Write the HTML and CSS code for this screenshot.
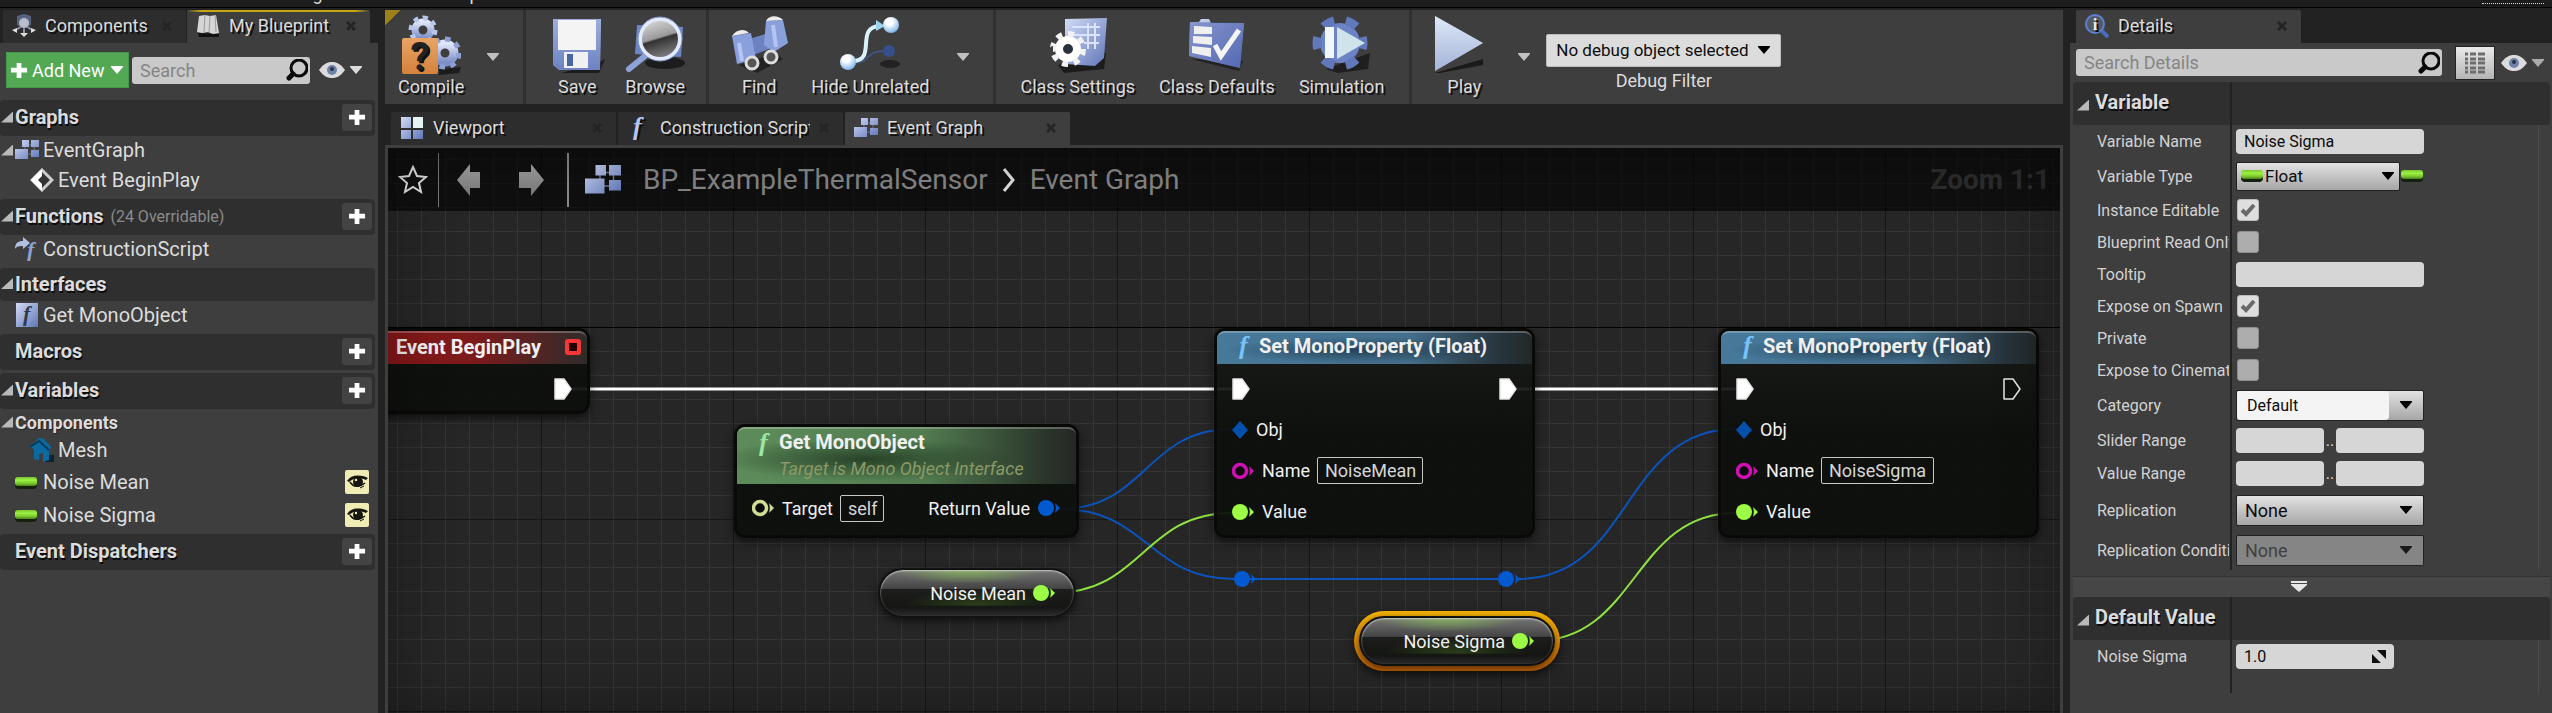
FILE: index.html
```html
<!DOCTYPE html>
<html lang="en">
  <head>
    <meta charset="utf-8">
    <meta name="viewport" content="width=device-width, initial-scale=1.0">
    <title>BP_ExampleThermalSensor</title>
    <link rel="stylesheet" href="styles.css">
  </head>
  <body>
    <!-- Shared icons -->
    <svg class="defs" aria-hidden="true">
      <defs>
        <linearGradient id="blue" x1="0" y1="0" x2="1" y2="1">
          <stop offset="0" stop-color="#d3dcf6"/>
          <stop offset="1" stop-color="#5f75b8"/>
        </linearGradient>
        <linearGradient id="steel" x1="0" y1="0" x2="0" y2="1">
          <stop offset="0" stop-color="#dfe6fb"/>
          <stop offset="1" stop-color="#7d8fc6"/>
        </linearGradient>
        <linearGradient id="orange" x1="0" y1="0" x2="0" y2="1">
          <stop offset="0" stop-color="#e9a465"/>
          <stop offset="1" stop-color="#d5823c"/>
        </linearGradient>
        <linearGradient id="lens" x1="0" y1="0" x2="0.3" y2="1">
          <stop offset="0" stop-color="#e4e4e4"/>
          <stop offset="0.55" stop-color="#9a9a9a"/>
          <stop offset="0.6" stop-color="#333"/>
          <stop offset="1" stop-color="#777"/>
        </linearGradient>
        <radialGradient id="ball" cx="0.4" cy="0.3" r="0.7">
          <stop offset="0.3" stop-color="#fff"/>
          <stop offset="1" stop-color="#7fb4e8"/>
        </radialGradient>
        <linearGradient id="pillfill" x1="0" y1="0" x2="0" y2="1">
          <stop offset="0" stop-color="#7ac52c"/>
          <stop offset="0.35" stop-color="#9df244"/>
          <stop offset="0.7" stop-color="#7cc92f"/>
          <stop offset="1" stop-color="#4a7f1a"/>
        </linearGradient>
        <linearGradient id="arrowfill" x1="0" y1="0" x2="0" y2="1">
          <stop offset="0" stop-color="#a5a5a5"/>
          <stop offset="1" stop-color="#777"/>
        </linearGradient>
      </defs>
      <symbol id="i-graph" viewBox="0 0 24 20">
        <path d="M10 5h9v9h-9z" fill="none" stroke="#6b7696"/>
        <path d="M7 0h7v7H7zM16 0h8v7h-8zM16 10h8v7h-8zM0 9h13v10H0z" fill="url(#blue)"/>
      </symbol>
      <symbol id="i-plus" viewBox="0 0 18 18">
        <path d="M6 1h5v5h6v5h-6v6H6v-6H0V6h6z" fill="currentColor"/>
      </symbol>
      <symbol id="i-search" viewBox="0 0 22 22">
        <circle cx="13" cy="9" r="8" fill="none" stroke="#0a0a0a" stroke-width="3"/>
        <path d="M7 15l-4 4" stroke="#0a0a0a" stroke-width="5" stroke-linecap="round"/>
      </symbol>
      <symbol id="i-eye" viewBox="0 0 26 16">
        <path d="M0 8C5 1 9 0 13 0s8 1 13 8c-5 7-9 8-13 8S5 15 0 8z" fill="#dcdcdc"/>
        <circle cx="13" cy="8" r="5" fill="#6f83a8"/>
        <circle cx="13" cy="7" r="2" fill="#2a3142"/>
      </symbol>
      <symbol id="i-down" viewBox="0 0 12 8">
        <path d="M0 0h12v1L6 8 0 1z" fill="currentColor"/>
      </symbol>
      <symbol id="i-close" viewBox="0 0 10 10">
        <path d="M1 1l8 8M9 1l-8 8" stroke="currentColor" stroke-width="3"/>
      </symbol>
      <symbol id="i-pill" viewBox="0 0 22 12">
        <rect x="0" y="1" width="22" height="11" rx="4" fill="#16210c"/>
        <rect x="0" y="0" width="22" height="9" rx="3" fill="url(#pillfill)"/>
      </symbol>
      <symbol id="i-visible" viewBox="0 0 24 24">
        <rect width="24" height="24" rx="2" fill="#efecb4"/>
        <path d="M2 11c4-6 12-7 21-3l-2 2C15 7 8 8 4 12z" fill="#16160f"/>
        <path d="M5 12c3 5 9 6 15 1" stroke="#16160f" stroke-width="1.5" fill="none"/>
        <circle cx="13" cy="12" r="5" fill="#16160f"/>
        <circle cx="11" cy="10" r="1.2" fill="#efecb4"/>
        <path d="M15 18l4-2" stroke="#16160f"/>
      </symbol>
      <symbol id="i-exec" viewBox="0 0 18 22">
        <path d="M1 1h9l7 10-7 10H1z" fill="currentColor" stroke="#e6e6e6" stroke-width="1.5" stroke-linejoin="round"/>
      </symbol>
      <symbol id="i-pin" viewBox="0 0 22 18">
        <circle cx="8" cy="9" r="8" fill="currentColor"/>
        <path d="M17 4c2 2 4 4 5 5-1 1-3 3-5 5 1-3 1-7 0-10z" fill="currentColor"/>
      </symbol>
      <symbol id="i-pin-open" viewBox="0 0 22 18">
        <circle cx="8" cy="9" r="6.5" fill="#0a0a0a" stroke="currentColor" stroke-width="3.5"/>
        <path d="M17 4c2 2 4 4 5 5-1 1-3 3-5 5 1-3 1-7 0-10z" fill="currentColor"/>
      </symbol>
      <symbol id="i-diamond" viewBox="0 0 16 18">
        <path d="M8 0l8 9-8 9-8-9z" fill="currentColor"/>
      </symbol>
    </svg>

    <!-- Menu bar, scrolled almost out of view -->
    <header class="menubar">
      <nav class="menu">
        <a href="#">Debug</a>
        <a href="#">Window</a>
        <a href="#">Help</a>
      </nav>
      <span class="parent-class">Parent class:</span>
      <span class="parent-link"></span>
    </header>

    <div class="editor">
      <!-- My Blueprint -->
      <aside class="side">
        <div class="tabs tabs-side">
          <button class="tab" type="button">
            <svg class="tab-icon" viewBox="0 0 24 24">
              <path d="M2 17l10-6 10 6M12 11v10" stroke="#8a93a8" stroke-width="2" fill="none"/>
              <path d="M5 2l7-2 7 2v9l-7 4-7-4z" fill="#556382"/>
              <circle cx="12" cy="9" r="5" fill="#b8bcc6"/>
              <path d="M0 16l5-2v5zM24 16l-5-2v5zM8 19h8l-4 4z" fill="#ddd"/>
            </svg>
            <span class="tab-name">Components</span>
            <svg class="tab-close"><use href="#i-close"/></svg>
          </button>
          <button class="tab tab-active tab-lit" type="button">
            <svg class="tab-icon" viewBox="0 0 24 24">
              <path d="M2 19l21 1v3H3z" fill="#111"/>
              <path d="M3 2l6-1 5 1 6-1 3 18-6 1-5-2-6 1-5-1z" fill="#d6d6d6"/>
              <path d="M9 1L8 18M14 2l-1 16M19 1l1 17" stroke="#9a9a9a"/>
            </svg>
            <span class="tab-name">My Blueprint</span>
            <svg class="tab-close"><use href="#i-close"/></svg>
          </button>
        </div>

        <div class="panel">
          <div class="side-tools">
            <button class="add-new" type="button">
              <svg class="plus"><use href="#i-plus"/></svg>
              Add New
              <svg class="down"><use href="#i-down"/></svg>
            </button>
            <label class="search">
              <input class="search-input" type="search" placeholder="Search" aria-label="Search">
              <svg class="search-icon"><use href="#i-search"/></svg>
            </label>
            <button class="view-options" type="button" aria-label="View options">
              <svg class="eye"><use href="#i-eye"/></svg>
              <svg class="down"><use href="#i-down"/></svg>
            </button>
          </div>

          <section class="category">
            <h2 class="category-head">
              <span class="fold"></span>Graphs
              <button class="add" type="button" aria-label="Add graph"><svg class="plus"><use href="#i-plus"/></svg></button>
            </h2>
            <div class="item">
              <span class="fold"></span>
              <svg class="item-icon"><use href="#i-graph"/></svg>EventGraph
            </div>
            <div class="item item-child">
              <svg class="item-icon" viewBox="0 0 24 24">
                <path d="M12 2l10 10-10 10L2 12z" fill="#333" stroke="#ccc" stroke-width="3"/>
                <path d="M12 1v7l-4 4 4 4v7L1 12z" fill="#fff"/>
              </svg>Event BeginPlay
            </div>
          </section>

          <section class="category">
            <h2 class="category-head">
              <span class="fold"></span>Functions
              <small class="note">(24 Overridable)</small>
              <button class="add" type="button" aria-label="Add function"><svg class="plus"><use href="#i-plus"/></svg></button>
            </h2>
            <div class="item">
              <span class="fold fold-none"></span>
              <svg class="item-icon" viewBox="0 0 24 24">
                <path d="M0 12c0-6 3-8 8-8V0l7 6-7 6V9c-4 0-6 0-8 3z" fill="#b3c0e2"/>
                <text x="12" y="20" class="f-glyph f-small" fill="#8ea3d8">f</text>
              </svg>ConstructionScript
            </div>
          </section>

          <section class="category">
            <h2 class="category-head category-short"><span class="fold"></span>Interfaces</h2>
            <div class="item">
              <span class="fold fold-none"></span>
              <svg class="item-icon" viewBox="0 0 24 24">
                <rect x="1" width="22" height="24" fill="url(#blue)"/>
                <text x="8" y="18" class="f-glyph f-small" fill="#333a4c">f</text>
              </svg>Get MonoObject
            </div>
          </section>

          <section class="category">
            <h2 class="category-head">
              <span class="fold fold-none"></span>Macros
              <button class="add" type="button" aria-label="Add macro"><svg class="plus"><use href="#i-plus"/></svg></button>
            </h2>
          </section>

          <section class="category">
            <h2 class="category-head">
              <span class="fold"></span>Variables
              <button class="add" type="button" aria-label="Add variable"><svg class="plus"><use href="#i-plus"/></svg></button>
            </h2>
            <h3 class="item item-group"><span class="fold"></span>Components</h3>
            <div class="item item-child item-tight">
              <svg class="item-icon" viewBox="0 0 24 24">
                <path d="M15 17h9v7h-9z" fill="#0a2433"/>
                <path d="M0 9L9 0l5 1 8 9-3 2v10l-6 2v-9l-4 1v6l-5-1V11z" fill="#0b6aa0"/>
                <path d="M0 9L9 3l10 9" stroke="#073b5c" stroke-width="2" fill="none"/>
              </svg>Mesh
            </div>
            <div class="item item-var">
              <span class="fold fold-none"></span>
              <svg class="item-icon"><use href="#i-pill" y="7" width="22" height="12"/></svg>Noise Mean
              <button class="visible" type="button" aria-label="Public"><svg class="visible-icon"><use href="#i-visible"/></svg></button>
            </div>
            <div class="item item-var">
              <span class="fold fold-none"></span>
              <svg class="item-icon"><use href="#i-pill" y="7" width="22" height="12"/></svg>Noise Sigma
              <button class="visible" type="button" aria-label="Public"><svg class="visible-icon"><use href="#i-visible"/></svg></button>
            </div>
          </section>

          <section class="category">
            <h2 class="category-head">
              <span class="fold fold-none"></span>Event Dispatchers
              <button class="add" type="button" aria-label="Add dispatcher"><svg class="plus"><use href="#i-plus"/></svg></button>
            </h2>
          </section>
        </div>
      </aside>

      <!-- Toolbar and graph -->
      <main class="center">
        <div class="toolbar">
          <div class="group group-compile">
            <button class="tool" type="button">
              <svg class="tool-icon" viewBox="0 0 60 60">
                <path d="M38 54l22-2-2 6-20 2z" fill="#1c1c1c"/>
                <circle cx="22" cy="15" r="8" fill="none" stroke="url(#steel)" stroke-width="7"/>
                <circle cx="22" cy="15" r="12" fill="none" stroke="#b9c6ec" stroke-width="5" pathLength="16" stroke-dasharray="1 1"/>
                <circle cx="44" cy="38" r="9" fill="none" stroke="url(#steel)" stroke-width="9"/>
                <circle cx="44" cy="38" r="14" fill="none" stroke="#8d9fd4" stroke-width="5" pathLength="16" stroke-dasharray="1 1"/>
                <rect x="1" y="23" width="36" height="36" rx="2" fill="url(#orange)"/>
                <text x="19" y="55" class="q-glyph">?</text>
              </svg>
              Compile
            </button>
            <button class="drop" type="button" aria-label="Compile options"><svg class="down"><use href="#i-down"/></svg></button>
          </div>

          <div class="group group-file">
            <button class="tool" type="button">
              <svg class="tool-icon" viewBox="0 0 60 60">
                <path d="M50 48l8-4-6 14H14z" fill="#1c1c1c"/>
                <path d="M6 4h48v3l-1 48H12l-6-5z" fill="url(#steel)"/>
                <path d="M6 4h48l-1 51H12l-6-5z" fill="#5b76bd" fill-opacity="0.5"/>
                <path d="M11 5h38v30H11z" fill="#f4f4f4"/>
                <path d="M17 37h24v16H17z" fill="#f0f0f0"/>
                <path d="M20 39h6v12h-6z" fill="#4a64a8"/>
              </svg>
              Save
            </button>
            <button class="tool" type="button">
              <svg class="tool-icon" viewBox="0 0 60 60">
                <ellipse cx="40" cy="48" rx="20" ry="6" fill="#1c1c1c"/>
                <path d="M12 10l46 2-2 30-46-3z" fill="#6d86c8"/>
                <path d="M20 41L4 54" stroke="#8ea2da" stroke-width="6" stroke-linecap="round"/>
                <circle cx="35" cy="24" r="20" fill="url(#lens)" stroke="#e3eafc" stroke-width="4"/>
                <circle cx="35" cy="24" r="22" fill="none" stroke="#7f92c6"/>
              </svg>
              Browse
            </button>
          </div>

          <div class="group group-edit">
            <button class="tool" type="button">
              <svg class="tool-icon" viewBox="0 0 60 60">
                <path d="M10 50l18 8 26-14-8-6z" fill="#222"/>
                <path d="M20 24l20-6v16l-16 6z" fill="#6d82c0"/>
                <path d="M3 21l19-3 5 26-19 5z" fill="#8aa0dd"/>
                <path d="M37 6l17-1 5 23-14 9-10-7z" fill="#8aa0dd"/>
                <path d="M3 21c4-7 13-8 17-3zM37 6c3-6 12-6 17-1z" fill="#ececec"/>
                <path d="M10 28l3 18M44 10l3 22" stroke="#b5c4f0" stroke-width="4"/>
                <circle cx="23" cy="48" r="6" fill="#555" stroke="#ddd" stroke-width="3"/>
                <circle cx="42" cy="42" r="6" fill="#555" stroke="#ddd" stroke-width="3"/>
              </svg>
              Find
            </button>
            <button class="tool" type="button">
              <svg class="tool-icon" viewBox="0 0 60 60">
                <ellipse cx="50" cy="49" rx="10" ry="4" fill="#222"/>
                <path d="M14 48c16 0 10-11 30-12" stroke="#3d5484" stroke-width="2" fill="none"/>
                <circle cx="49" cy="36" r="6" fill="#36508c"/>
                <path d="M12 46c26 0 2-34 28-35" stroke="#d9f1f8" stroke-width="4" fill="none"/>
                <path d="M36 5l9 6-9 5z" fill="#9cd4ee"/>
                <circle cx="8" cy="47" r="8" fill="url(#ball)"/>
                <circle cx="51" cy="10" r="8" fill="url(#ball)"/>
              </svg>
              Hide Unrelated
            </button>
            <button class="drop" type="button" aria-label="Hide options"><svg class="down"><use href="#i-down"/></svg></button>
          </div>

          <div class="group group-class">
            <button class="tool" type="button">
              <svg class="tool-icon" viewBox="0 0 60 60">
                <path d="M10 50l48-12-2 16-40 4z" fill="#1c1c1c"/>
                <path d="M17 4l42-1-3 40-9 8-30-2z" fill="url(#blue)"/>
                <path d="M24 12h28M24 20h28M36 28h15M40 8v26M47 8v26" stroke="#dbe4fb" stroke-width="2"/>
                <circle cx="20" cy="34" r="9" fill="#28303c" stroke="#fff" stroke-width="8"/>
                <circle cx="20" cy="34" r="15" fill="none" stroke="#f2f2f2" stroke-width="6" pathLength="16" stroke-dasharray="1 1"/>
              </svg>
              Class Settings
            </button>
            <button class="tool" type="button">
              <svg class="tool-icon" viewBox="0 0 60 60">
                <path d="M4 44l52 2-4 10z" fill="#222"/>
                <path d="M3 7h9l2-3h8l2 4 33 0-4 45L2 41z" fill="url(#blue)"/>
                <path d="M3 7l54 1-4 45L2 41z" fill="#4a5fae" fill-opacity="0.55"/>
                <path d="M7 11l18 1v7l-18 0zM6 21l19 1v8L6 28zM5 31l19 2v9L5 38z" fill="#efefef"/>
                <path d="M28 30l6 11 18-26" stroke="#f4f4f4" stroke-width="5" fill="none"/>
              </svg>
              Class Defaults
            </button>
            <button class="tool" type="button">
              <svg class="tool-icon" viewBox="0 0 60 60">
                <path d="M14 54l44-16-2 16-30 4z" fill="#1f1f1f"/>
                <circle cx="28" cy="28" r="20" fill="#6c83c6"/>
                <circle cx="28" cy="28" r="23" fill="none" stroke="#6178bb" stroke-width="9" pathLength="12" stroke-dasharray="1 1" stroke-dashoffset="0.5"/>
                <path d="M13 12h9v31h-9z" fill="#f1f6f6"/>
                <path d="M25 12l28 16-28 16z" fill="#cfe3ea"/>
              </svg>
              Simulation
            </button>
          </div>

          <div class="group group-play">
            <button class="tool" type="button">
              <svg class="tool-icon" viewBox="0 0 60 60">
                <path d="M1 58l48-14v6L6 58z" fill="#1a1a1a"/>
                <path d="M1 1l48 27L1 56z" fill="url(#steel)"/>
                <path d="M1 1l48 27L1 56z" fill="#dfeaf4" fill-opacity="0.4"/>
              </svg>
              Play
            </button>
            <button class="drop" type="button" aria-label="Play options"><svg class="down"><use href="#i-down"/></svg></button>
            <div class="debug">
              <select class="debug-select" id="debug">
                <option>No debug object selected</option>
              </select>
              <label class="debug-label" for="debug">Debug Filter</label>
            </div>
          </div>
        </div>

        <div class="tabs tabs-doc">
          <button class="tab" type="button">
            <svg class="tab-icon" viewBox="0 0 24 24">
              <path d="M1 1h10v11H1zM13 1h10v11H13zM1 14h10v9H1zM13 14h10v9H13z" fill="url(#blue)"/>
              <path d="M13 1h10v11H13z" fill="#e4f4f4"/>
            </svg>
            <span class="tab-name">Viewport</span>
            <svg class="tab-close"><use href="#i-close"/></svg>
          </button>
          <button class="tab" type="button">
            <svg class="tab-icon" viewBox="0 0 24 24"><text x="6" y="19" class="f-glyph" fill="#b5c5f2">f</text></svg>
            <span class="tab-name">Construction Script</span>
            <svg class="tab-close"><use href="#i-close"/></svg>
          </button>
          <button class="tab tab-active" type="button">
            <svg class="tab-icon"><use href="#i-graph"/></svg>
            <span class="tab-name">Event Graph</span>
            <svg class="tab-close"><use href="#i-close"/></svg>
          </button>
        </div>

        <div class="graph">
          <div class="titlebar">
            <button class="star" type="button" aria-label="Bookmark">
              <svg class="star-icon" viewBox="0 0 30 30"><path d="M15 2l4 9 9 1-7 6 2 9-8-5-8 5 2-9-7-6 9-1z" fill="none" stroke="#e4e4e4" stroke-width="2"/></svg>
            </button>
            <button class="nav" type="button" aria-label="Back">
              <svg class="nav-icon" viewBox="0 0 26 34"><path d="M1 17L14 1v8h10v16H14v8z" fill="url(#arrowfill)"/></svg>
            </button>
            <button class="nav nav-next" type="button" aria-label="Forward">
              <svg class="nav-icon" viewBox="0 0 26 34"><path d="M25 17L12 1v8H0v16h12v8z" fill="url(#arrowfill)"/></svg>
            </button>
            <svg class="crumb-icon"><use href="#i-graph"/></svg>
            <a class="crumb" href="#">BP_ExampleThermalSensor</a>
            <svg class="chevron" viewBox="0 0 14 24"><path d="M2 1l9 11-9 11" fill="none" stroke="#ddd" stroke-width="3"/></svg>
            <a class="crumb" href="#">Event Graph</a>
            <span class="zoom">Zoom 1:1</span>
          </div>

          <svg class="wires">
            <g fill="none" stroke="#0b54bd" stroke-width="2">
              <path d="M672 361C758 361 758 281 844 281"/>
              <path d="M672 361C760 361 760 431 846 431"/>
              <path d="M846 431H1110"/>
              <path d="M1130 431C1245 431 1233 281 1348 281"/>
            </g>
            <g fill="none" stroke="#90e043" stroke-width="2">
              <path d="M665 445C755 445 755 365 844 365"/>
              <path d="M1146 493C1250 493 1244 365 1348 365"/>
            </g>
            <path d="M184 241H844M1129 241H1348" stroke="#fff" stroke-width="3"/>
            <use href="#i-pin" x="846" y="422" width="22" height="18" class="c-obj"/>
            <use href="#i-pin" x="1110" y="422" width="22" height="18" class="c-obj"/>
          </svg>

          <article class="node node-event">
            <h4 class="node-head head-red">
              Event BeginPlay
              <span class="delegate"></span>
            </h4>
            <div class="node-body">
              <div class="row row-end"><svg class="exec c-exec"><use href="#i-exec"/></svg></div>
            </div>
          </article>

          <article class="node node-get">
            <h4 class="node-head head-green">
              <svg class="f-icon" viewBox="0 0 24 28"><text x="7" y="22" class="f-glyph" fill="#9be6a0">f</text></svg>
              <span>Get MonoObject<em class="node-sub">Target is Mono Object Interface</em></span>
            </h4>
            <div class="node-body">
              <div class="row">
                <svg class="pin c-self"><use href="#i-pin-open"/></svg>
                <label for="self">Target</label>
                <input class="pin-value pin-self" id="self" value="self" readonly>
                <span class="out">Return Value</span>
                <svg class="pin c-obj"><use href="#i-pin"/></svg>
              </div>
            </div>
          </article>

          <article class="node node-set node-set-mean">
            <h4 class="node-head head-blue">
              <svg class="f-icon" viewBox="0 0 24 28"><text x="7" y="22" class="f-glyph" fill="#74c4fb">f</text></svg>
              Set MonoProperty (Float)
            </h4>
            <div class="node-body">
              <div class="row">
                <svg class="exec c-exec"><use href="#i-exec"/></svg>
                <svg class="exec c-exec exec-out"><use href="#i-exec"/></svg>
              </div>
              <div class="row"><svg class="gem c-gem"><use href="#i-diamond"/></svg>Obj</div>
              <div class="row">
                <svg class="pin c-name"><use href="#i-pin-open"/></svg>
                <label for="name-mean">Name</label>
                <input class="pin-value pin-mean" id="name-mean" value="NoiseMean">
              </div>
              <div class="row"><svg class="pin c-float"><use href="#i-pin"/></svg>Value</div>
            </div>
          </article>

          <article class="node node-set node-set-sigma">
            <h4 class="node-head head-blue">
              <svg class="f-icon" viewBox="0 0 24 28"><text x="7" y="22" class="f-glyph" fill="#74c4fb">f</text></svg>
              Set MonoProperty (Float)
            </h4>
            <div class="node-body">
              <div class="row">
                <svg class="exec c-exec"><use href="#i-exec"/></svg>
                <svg class="exec c-exec-open exec-out"><use href="#i-exec"/></svg>
              </div>
              <div class="row"><svg class="gem c-gem"><use href="#i-diamond"/></svg>Obj</div>
              <div class="row">
                <svg class="pin c-name"><use href="#i-pin-open"/></svg>
                <label for="name-sigma">Name</label>
                <input class="pin-value pin-sigma" id="name-sigma" value="NoiseSigma">
              </div>
              <div class="row"><svg class="pin c-float"><use href="#i-pin"/></svg>Value</div>
            </div>
          </article>

          <div class="getter getter-mean">
            Noise Mean <svg class="pin c-float"><use href="#i-pin"/></svg>
          </div>
          <div class="selected">
            <div class="getter">
              Noise Sigma <svg class="pin c-float"><use href="#i-pin"/></svg>
            </div>
          </div>
        </div>
      </main>

      <!-- Details -->
      <aside class="details">
        <div class="tabs tabs-details">
          <button class="tab tab-active" type="button">
            <svg class="tab-icon" viewBox="0 0 24 24">
              <path d="M16 16l7 7" stroke="#4a6cc0" stroke-width="4"/>
              <circle cx="10" cy="10" r="9" fill="#555b66" stroke="#5c7fd0" stroke-width="2"/>
              <text x="10" y="16" class="i-glyph">i</text>
            </svg>
            <span class="tab-name">Details</span>
            <svg class="tab-close"><use href="#i-close"/></svg>
          </button>
        </div>

        <div class="panel panel-details">
          <div class="details-tools">
            <label class="search">
              <input class="search-input" type="search" placeholder="Search Details" aria-label="Search Details">
              <svg class="search-icon"><use href="#i-search"/></svg>
            </label>
            <button class="matrix" type="button" aria-label="Property matrix">
              <svg class="matrix-icon" viewBox="0 0 20 22">
                <path d="M0 2h3M0 7h3M0 11h3M0 16h3M0 20h3M5 2h6M5 7h6M5 11h6M5 16h6M5 20h6M13 2h7M13 7h7M13 11h7M13 16h7M13 20h7" stroke="#6d6d6d" stroke-width="3"/>
              </svg>
            </button>
            <button class="view-options" type="button" aria-label="View options">
              <svg class="eye"><use href="#i-eye"/></svg>
              <svg class="down"><use href="#i-down"/></svg>
            </button>
          </div>

          <div class="props">
            <h2 class="props-head"><span class="fold"></span>Variable</h2>
            <div class="prop">
              <label class="prop-name" for="var-name">Variable Name</label>
              <input class="field" id="var-name" value="Noise Sigma">
            </div>
            <div class="prop prop-type">
              <label class="prop-name" for="var-type">Variable Type</label>
              <span class="combo combo-type">
                <svg class="pill"><use href="#i-pill"/></svg>
                <select class="combo-select" id="var-type"><option>Float</option></select>
              </span>
              <svg class="pill"><use href="#i-pill"/></svg>
            </div>
            <div class="prop prop-check">
              <label class="prop-name" for="editable">Instance Editable</label>
              <input class="check" type="checkbox" id="editable" checked>
            </div>
            <div class="prop prop-check">
              <label class="prop-name" for="readonly">Blueprint Read Only</label>
              <input class="check" type="checkbox" id="readonly">
            </div>
            <div class="prop prop-check">
              <label class="prop-name" for="tooltip">Tooltip</label>
              <input class="field" id="tooltip">
            </div>
            <div class="prop prop-check">
              <label class="prop-name" for="spawn">Expose on Spawn</label>
              <input class="check" type="checkbox" id="spawn" checked>
            </div>
            <div class="prop prop-check">
              <label class="prop-name" for="private">Private</label>
              <input class="check" type="checkbox" id="private">
            </div>
            <div class="prop prop-check">
              <label class="prop-name" for="cinematics">Expose to Cinematics</label>
              <input class="check" type="checkbox" id="cinematics">
            </div>
            <div class="prop prop-combo">
              <label class="prop-name" for="category">Category</label>
              <span class="combo">
                <input class="combo-input" id="category" value="Default">
                <button class="combo-open" type="button" aria-label="Choose category"><svg class="down"><use href="#i-down"/></svg></button>
              </span>
            </div>
            <div class="prop">
              <label class="prop-name" for="slider-min">Slider Range</label>
              <input class="field field-half" id="slider-min">
              <span class="dots">..</span>
              <input class="field field-half" aria-label="Slider maximum">
            </div>
            <div class="prop">
              <label class="prop-name" for="value-min">Value Range</label>
              <input class="field field-half" id="value-min">
              <span class="dots">..</span>
              <input class="field field-half" aria-label="Value maximum">
            </div>
            <div class="prop prop-tall">
              <label class="prop-name" for="replication">Replication</label>
              <span class="combo">
                <select class="combo-select" id="replication"><option>None</option></select>
              </span>
            </div>
            <div class="prop prop-tall">
              <label class="prop-name" for="condition">Replication Condition</label>
              <span class="combo combo-off">
                <select class="combo-select" id="condition" disabled><option>None</option></select>
              </span>
            </div>
          </div>

          <button class="more" type="button" aria-label="Show advanced">
            <svg class="more-icon" viewBox="0 0 16 11"><path d="M0 0h16v2H0zM0 3h16v1l-8 7-8-7z" fill="#e6e6e6"/></svg>
          </button>

          <div class="props props-last">
            <h2 class="props-head"><span class="fold"></span>Default Value</h2>
            <div class="prop">
              <label class="prop-name" for="default">Noise Sigma</label>
              <span class="field field-number">
                <input class="number-input" id="default" value="1.0">
                <svg class="spin" viewBox="0 0 14 14"><path d="M5 0h9v9zM0 4v9h9z" fill="#111"/></svg>
              </span>
            </div>
          </div>
        </div>
      </aside>
    </div>
  </body>
</html>
```
FILE: styles.css
```css
* {
  margin: 0;
  padding: 0;
  box-sizing: border-box;
}

body {
  display: flex;
  flex-direction: column;
  height: 100vh;
  overflow: hidden;
  background: #222;
  color: #dcdcdc;
  font-family: Roboto, "Noto Sans", sans-serif;
  font-size: 20px;
}

button,
input,
select {
  font: inherit;
  color: inherit;
  border: none;
  background: none;
}

a {
  color: inherit;
  text-decoration: none;
}

svg {
  flex: none;
}

.defs {
  position: absolute;
  width: 0;
  height: 0;
}

.f-glyph {
  font: italic bold 26px "Liberation Serif", serif;
}

.f-small {
  font-size: 22px;
}

.q-glyph {
  font: bold 38px Roboto, sans-serif;
  text-anchor: middle;
  fill: #222;
}

.i-glyph {
  font: bold 17px "Liberation Serif", serif;
  text-anchor: middle;
  fill: #eee;
}

/* Menu bar */
.menubar {
  display: flex;
  align-items: flex-end;
  flex: none;
  height: 8px;
  padding: 0 8px 3px 271px;
  overflow: hidden;
  background: #1d1d1d;
  border-bottom: 1px solid #000;
  font-size: 18px;
  line-height: 20px;
}

.menu {
  display: flex;
  gap: 28px;
}

.parent-class {
  margin-left: auto;
  color: #090909;
}

.parent-link {
  width: 62px;
  margin-left: 8px;
  border-bottom: 1px dotted #ddd;
}

/* Main columns */
.editor {
  display: grid;
  grid-template-columns: 378px minmax(0, 1fr) 482px;
  gap: 7px;
  flex: 1;
  min-height: 0;
  padding-top: 2px;
}

.side,
.center,
.details {
  display: flex;
  flex-direction: column;
  min-width: 0;
  min-height: 0;
}

.panel {
  flex: 1;
  background: #3e3e3e;
}

/* Tabs */
.tabs {
  display: flex;
  flex: none;
  height: 33px;
}

.tabs-side {
  gap: 1px;
  padding-left: 3px;
}

.tab {
  display: flex;
  align-items: center;
  gap: 9px;
  width: 225px;
  padding: 0 14px 2px 9px;
  border-radius: 2px 2px 0 0;
  background: #2d2d2d;
  font-size: 18px;
  text-align: left;
  text-shadow: 2px 2px 0 #0d0d0d;
}

.tabs-side .tab {
  width: 183px;
}

.tab-active {
  background: #3e3e3e;
}

.tab-lit {
  background: linear-gradient(90deg, transparent, #c7a712 8%, #c7a712 92%, transparent) top / 100% 2px no-repeat #3e3e3e;
}

.tab-icon {
  width: 24px;
  height: 24px;
}

.tab-name {
  flex: 1;
  overflow: hidden;
  white-space: nowrap;
}

.tab-close {
  width: 10px;
  height: 10px;
  color: #242424;
}

/* My Blueprint */
.side-tools {
  display: flex;
  align-items: center;
  height: 57px;
  padding: 0 16px 3px 6px;
}

.add-new {
  display: flex;
  align-items: center;
  gap: 4px;
  width: 123px;
  height: 36px;
  padding-left: 4px;
  border: 1px solid #46994a;
  background: #52a853;
  color: #fff;
  font-size: 18px;
}

.plus {
  width: 17px;
  height: 17px;
}

.down {
  width: 12px;
  height: 8px;
}

.add-new .down {
  margin-left: 3px;
}

.search {
  display: flex;
  align-items: center;
  flex: 1;
  min-width: 0;
  height: 27px;
  margin-left: 3px;
  padding: 0 2px 0 8px;
  border-radius: 3px;
  background: #c9c9c9;
  font-size: 18px;
}

.search-input {
  flex: 1;
  min-width: 0;
  outline: none;
  color: #222;
}

.search-input::placeholder {
  color: #858585;
}

.search-icon {
  width: 22px;
  height: 22px;
}

.view-options {
  display: flex;
  align-items: center;
  gap: 5px;
  margin-left: 9px;
}

.eye {
  width: 26px;
  height: 16px;
}

.category {
  margin-bottom: 3px;
}

.category-head {
  display: flex;
  align-items: center;
  height: 36px;
  margin-right: 3px;
  padding: 0 3px 2px 1px;
  border-radius: 4px;
  background: #2f2f2f;
  font-size: 20px;
  font-weight: 700;
  text-shadow: 1px 2px 0 #0b0b0b;
}

.category-short {
  height: 33px;
}

.note {
  margin-left: 7px;
  color: #8b8b8b;
  font-size: 16px;
  font-weight: 400;
  text-shadow: none;
}

.fold {
  flex: none;
  width: 12px;
  height: 11px;
  margin-right: 2px;
  background: #b9b9b9;
  clip-path: polygon(100% 0, 100% 100%, 0 100%);
}

.fold-none {
  background: none;
}

.add {
  display: flex;
  align-items: center;
  justify-content: center;
  width: 30px;
  height: 27px;
  margin-left: auto;
  border-radius: 3px;
  background: #434343;
  color: #fff;
}

.item {
  display: flex;
  align-items: center;
  height: 30px;
  padding: 0 9px 2px 1px;
}

.item-child {
  padding-left: 30px;
}

.item-group {
  height: 28px;
  font-size: 18px;
  text-shadow: 1px 1px 0 #222;
}

.item-tight {
  height: 28px;
}

.item-var {
  height: 33px;
  padding-bottom: 0;
}

.item-icon {
  width: 24px;
  height: 24px;
  margin-right: 4px;
}

.visible {
  width: 24px;
  height: 24px;
  margin-left: auto;
}

.visible-icon {
  display: block;
  width: 24px;
  height: 24px;
}

/* Toolbar */
.toolbar {
  display: flex;
  flex: none;
  height: 94px;
  background: linear-gradient(135deg, #9d8019 11px, transparent 11px), #3e3e3e;
}

.group {
  display: flex;
  align-items: center;
  padding: 0 20px;
}

.group + .group {
  border-left: 3px solid #303030;
}

.group-compile {
  padding: 0 24px 0 13px;
}

.group-file {
  gap: 14px;
  padding: 0 19px;
}

.group-edit {
  gap: 20px;
  padding: 0 24px 0 18px;
}

.group-class {
  gap: 24px;
  padding: 0 25px 0 24px;
}

.tool {
  display: flex;
  flex-direction: column;
  align-items: center;
  min-width: 64px;
  font-size: 18px;
  line-height: 24px;
  text-shadow: 2px 2px 0 #101010;
  white-space: nowrap;
}

.tool-icon {
  width: 60px;
  height: 60px;
}

.drop {
  display: flex;
  color: #c0c0c0;
}

.group-compile .drop {
  margin-left: 23px;
}

.group-edit .drop {
  margin-left: 8px;
}

.group-play .drop {
  margin: 0 16px 0 22px;
}

.debug {
  display: flex;
  flex-direction: column;
  align-items: center;
  gap: 3px;
  padding-top: 10px;
  font-size: 18px;
}

.debug-select {
  width: 235px;
  height: 33px;
  padding: 0 20px 0 9px;
  appearance: none;
  border: 1px solid #bbb;
  border-radius: 2px;
  background: url("data:image/svg+xml,%3Csvg xmlns='http://www.w3.org/2000/svg' width='12' height='8'%3E%3Cpath d='M0 0h12v1L6 8 0 1z'/%3E%3C/svg%3E") right 10px center no-repeat #dcdcdc;
  color: #0c0c0c;
  font-size: 17px;
}

/* Document tabs */
.tabs-doc {
  gap: 2px;
  margin-top: 8px;
  padding-left: 6px;
}

/* Graph canvas */
.graph {
  position: relative;
  flex: 1;
  min-height: 0;
  overflow: hidden;
  border: 3px solid #3e3e3e;
  border-bottom: none;
  background:
    linear-gradient(#000 1px, transparent 1px) 0 179px / 100% 3000px no-repeat,
    linear-gradient(#171717 1px, transparent 1px) 0 179px / 192px 192px,
    linear-gradient(90deg, #171717 1px, transparent 1px) 153px 0 / 192px 192px,
    linear-gradient(#343434 1px, transparent 1px) 0 11px / 24px 24px,
    linear-gradient(90deg, #343434 1px, transparent 1px) 9px 0 / 24px 24px,
    #262626;
}

.graph::after {
  content: "";
  position: absolute;
  inset: 0;
  box-shadow: inset 0 0 60px rgba(0, 0, 0, 0.35);
  pointer-events: none;
}

.titlebar {
  display: flex;
  align-items: center;
  height: 63px;
  padding: 0 10px;
  background: rgba(0, 0, 0, 0.6);
  color: #858585;
  font-size: 28px;
}

.star {
  display: flex;
  align-items: center;
  height: 54px;
  padding-right: 10px;
  border-right: 1px solid #777;
}

.star-icon {
  width: 30px;
  height: 30px;
}

.nav {
  display: flex;
  align-items: center;
  height: 54px;
  margin-left: 17px;
}

.nav-next {
  margin-left: 37px;
  padding-right: 22px;
  border-right: 2px solid #888;
}

.nav-icon {
  width: 26px;
  height: 34px;
}

.crumb-icon {
  width: 36px;
  height: 30px;
  margin: 0 22px 0 16px;
}

.chevron {
  width: 14px;
  height: 24px;
  margin: 0 14px;
}

.zoom {
  margin-left: auto;
  color: #2c2c2c;
  font-size: 28px;
  font-weight: 700;
}

.wires {
  position: absolute;
  top: 0;
  left: 0;
  width: 100%;
  height: 100%;
}

/* Pin colours */
.c-exec {
  color: #fff;
}

.c-exec-open {
  color: #10120f;
}

.c-obj {
  color: #0259d0;
}

.c-gem {
  color: #0450ad;
}

.c-name {
  color: #d010b4;
}

.c-float {
  color: #9dfc45;
}

.c-self {
  color: #d0dc96;
}

/* Nodes */
.node {
  position: absolute;
  border: 3px solid #090a08;
  border-radius: 11px;
  background: linear-gradient(rgba(24, 26, 23, 0.92), rgba(13, 15, 12, 0.94) 50%);
  box-shadow: 0 4px 10px rgba(0, 0, 0, 0.55);
  color: #f0f0f0;
  font-size: 18px;
}

.node-event {
  left: -60px;
  top: 180px;
  width: 262px;
  height: 86px;
}

.node-get {
  left: 346px;
  top: 276px;
  width: 345px;
}

.node-set {
  top: 180px;
  width: 321px;
}

.node-set-mean {
  left: 826px;
}

.node-set-sigma {
  left: 1330px;
}

.node-head {
  display: flex;
  align-items: center;
  height: 33px;
  padding: 0 0 5px 15px;
  border-top: 2px solid rgba(255, 255, 255, 0.25);
  border-radius: 8px 8px 0 0;
  font-size: 20px;
  font-weight: 700;
  line-height: 26px;
  white-space: nowrap;
}

.head-red {
  justify-content: space-between;
  padding: 0 6px 4px 65px;
  background: linear-gradient(90deg, #8c1517, #7d1a1b 55%, #4a2626 85%, #2c2d2b);
}

.head-green {
  align-items: flex-start;
  height: 57px;
  background:
    radial-gradient(ellipse at 38% 55%, rgba(20, 40, 22, 0.7), transparent 50%),
    linear-gradient(90deg, #5d8c5a, #527c50 55%, #2b372b 90%, #242724);
}

.head-blue {
  background:
    radial-gradient(ellipse at 45% 55%, rgba(15, 35, 50, 0.6), transparent 55%),
    linear-gradient(90deg, #47799a, #44708d 60%, #27343c 90%, #222829);
}

.f-icon {
  width: 24px;
  height: 28px;
  margin-right: 3px;
}

.node-sub {
  display: block;
  color: #8c9966;
  font-size: 18px;
  font-weight: 400;
  line-height: 28px;
}

.delegate {
  width: 16px;
  height: 16px;
  border: 4px solid #fb3636;
  border-radius: 3px;
  background: #260000;
}

.node-body {
  padding: 4px 15px 0;
}

.node-get .node-body {
  padding: 6px 16px 9px 15px;
}

.row {
  display: flex;
  align-items: center;
  height: 41px;
}

.node-set .node-body {
  padding-bottom: 3px;
}

.row-end {
  justify-content: flex-end;
}

.node-get .row {
  height: 36px;
}

.exec {
  width: 18px;
  height: 22px;
}

.exec-out {
  margin-left: auto;
}

.gem {
  width: 16px;
  height: 18px;
  margin-right: 8px;
}

.pin {
  width: 22px;
  height: 18px;
  margin-right: 8px;
}

.out {
  margin: 0 8px 0 auto;
}

.out + .pin {
  margin-right: 0;
}

.pin-value {
  height: 27px;
  margin-left: 7px;
  padding-left: 7px;
  border: 1px solid #c8c8c8;
  border-radius: 2px;
  color: #d6d6d6;
}

.pin-self {
  width: 44px;
}

.pin-mean {
  width: 106px;
}

.pin-sigma {
  width: 113px;
}

.getter {
  display: flex;
  align-items: center;
  justify-content: flex-end;
  gap: 7px;
  width: 198px;
  height: 50px;
  padding-right: 19px;
  border: 2px solid #111;
  border-radius: 25px;
  background:
    radial-gradient(ellipse at 45% 0, rgba(140, 195, 90, 0.75), transparent 50%) top / 100% 42% no-repeat,
    radial-gradient(ellipse at 50% 100%, rgba(60, 90, 30, 0.6), transparent 55%) 0 60% / 100% 45% no-repeat,
    linear-gradient(#747474, #454545 40%, #1c1e1b 42%, #151614 80%, #2a2a2a);
  box-shadow: inset 0 1px 2px #ccc, 0 3px 8px rgba(0, 0, 0, 0.6);
  color: #f0f0f0;
  font-size: 18px;
}

.getter .pin {
  margin-right: 0;
}

.getter-mean {
  position: absolute;
  left: 490px;
  top: 420px;
}

.selected {
  position: absolute;
  left: 966px;
  top: 463px;
  padding: 5px;
  border-radius: 30px;
  background: linear-gradient(#f5b400, #d06800);
  box-shadow: 0 4px 8px rgba(0, 0, 0, 0.5);
}

.selected .getter {
  width: 196px;
}

/* Details */
.tabs-details {
  padding-left: 6px;
}

.panel-details {
  padding-left: 3px;
}

.details-tools {
  display: flex;
  align-items: center;
  height: 39px;
  padding-right: 8px;
}

.matrix {
  display: flex;
  align-items: center;
  justify-content: center;
  width: 40px;
  height: 34px;
  margin-left: 13px;
  border: 1px solid #222;
  background: linear-gradient(#eaeaea, #b4b4b4);
}

.matrix-icon {
  width: 20px;
  height: 22px;
}

.details-tools .view-options {
  margin-left: 6px;
  color: #aaa;
}

.props {
  margin-right: 2px;
  background:
    linear-gradient(#222, #222) 157px 0 / 2px 100% no-repeat,
    linear-gradient(#4c4c4c, #4c4c4c) right 11px top / 1px 100% no-repeat;
}

.props-head {
  display: flex;
  align-items: center;
  height: 43px;
  padding: 0 0 3px 4px;
  border-radius: 4px 4px 0 0;
  background: linear-gradient(#222, #222) 157px 0 / 2px 100% no-repeat #2f2f2f;
  font-size: 20px;
  font-weight: 700;
  text-shadow: 1px 2px 0 #0b0b0b;
}

.props-head .fold {
  margin: 6px 6px 0 0;
}

.prop {
  display: flex;
  align-items: center;
  height: 33px;
  padding-left: 24px;
  font-size: 16px;
}

.prop-type {
  height: 36px;
}

.prop-check {
  height: 32px;
}

.prop-combo {
  height: 38px;
}

.prop-tall {
  height: 40px;
}

.prop-name {
  flex: none;
  width: 132px;
  margin-right: 7px;
  overflow: hidden;
  color: #d2d2d2;
  white-space: nowrap;
}

.field {
  width: 188px;
  height: 25px;
  padding: 0 8px;
  border-radius: 4px;
  background: #d6d6d6;
  color: #0c0c0c;
}

.field-half {
  width: 88px;
}

.dots {
  width: 12px;
  text-align: center;
}

.field-number {
  display: flex;
  align-items: center;
  width: 158px;
}

.number-input {
  flex: 1;
  min-width: 0;
}

.spin {
  width: 14px;
  height: 14px;
}

.combo {
  display: flex;
  align-items: center;
  width: 188px;
  height: 31px;
  border: 1px solid #222;
  border-radius: 2px;
  background: linear-gradient(#e2e2e2, #cdcdcd 35%, #a6a6a6);
  color: #0c0c0c;
  font-size: 18px;
}

.combo-type {
  width: 164px;
  height: 29px;
  margin-right: 1px;
  padding-left: 4px;
  font-size: 17px;
}

.combo-type .combo-select {
  padding-left: 2px;
  background-position: right 5px center;
}

.combo-off {
  background: #858585;
}

.combo-select {
  flex: 1;
  min-width: 0;
  height: 100%;
  padding-left: 8px;
  appearance: none;
  background: url("data:image/svg+xml,%3Csvg xmlns='http://www.w3.org/2000/svg' width='12' height='8'%3E%3Cpath d='M0 0h12v1L6 8 0 1z'/%3E%3C/svg%3E") right 11px center no-repeat;
}

.combo-select:disabled {
  color: #303030;
  opacity: 0.8;
}

.combo-input {
  flex: 1;
  min-width: 0;
  height: 100%;
  padding-left: 10px;
  border-radius: 4px;
  background: #f4f4f4;
  font-size: 16px;
}

.combo-open {
  display: flex;
  justify-content: center;
  width: 34px;
  color: #000;
}

.pill {
  width: 22px;
  height: 12px;
}

.check {
  width: 22px;
  height: 22px;
  margin-left: 1px;
  appearance: none;
  border: 1px solid #8c8c8c;
  border-radius: 3px;
  background: #adadad;
}

.check:checked {
  border-color: #bbb;
  background: url("data:image/svg+xml,%3Csvg xmlns='http://www.w3.org/2000/svg' width='16' height='14'%3E%3Cpath d='M2 7l4 4 8-9' fill='none' stroke='%236a6a6a' stroke-width='4'/%3E%3C/svg%3E") center no-repeat #dedede;
}

.more {
  display: flex;
  justify-content: center;
  width: calc(100% - 2px);
  height: 21px;
  margin-top: 6px;
  padding: 4px 25px 0 0;
  border-top: 1px solid #333;
  background: #464646;
}

.more-icon {
  width: 16px;
  height: 11px;
}

.props-last {
  height: 96px;
}
```
